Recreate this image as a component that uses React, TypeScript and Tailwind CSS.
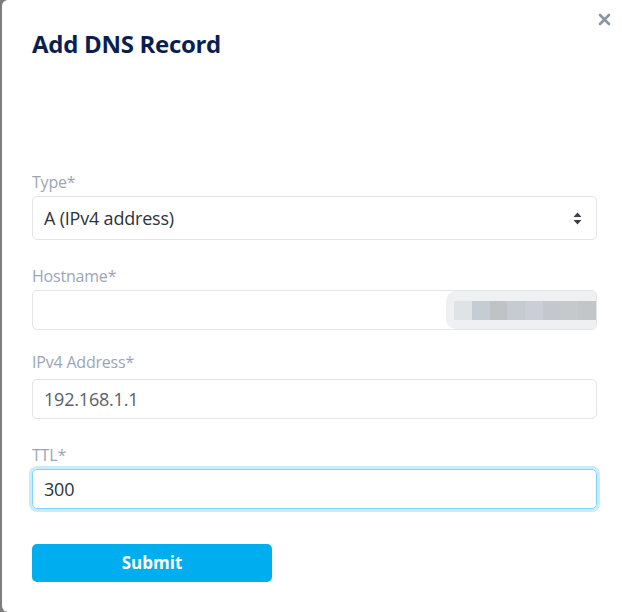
import { useState } from "react";

const BLUR_BLOCKS = ["#e0e3e6", "#c5ccd3", "#bfc3c5", "#c6cad1", "#cbced6", "#c4c8cc", "#c6c9cc", "#c3c6c8"];

function Label({ text, className = "" }: { text: string; className?: string }) {
  return <label className={`block text-[16px] leading-5 tracking-[-0.2px] text-[#9ca5b6] ${className}`}>{text}</label>;
}

export default function App() {
  const [ttl, setTtl] = useState("300");

  return (
    <div className="h-[612px] w-[622px] overflow-hidden bg-[#7d7d7d] font-['Open_Sans',sans-serif]">
      <div className="relative ml-[2px] h-[612px] rounded-l-md bg-white pl-[30px] pr-[25px]">
        <button className="absolute right-[11px] top-[13px] text-[#8a94a7]" aria-label="Close">
          <svg width="13" height="13" viewBox="0 0 13 13" fill="none" stroke="currentColor" strokeWidth="2.6" strokeLinecap="round">
            <path d="M2 2l9 9M11 2l-9 9" />
          </svg>
        </button>

        <h2 className="pt-[28px] text-[24px] font-bold leading-[32px] tracking-[-0.3px] text-[#0b1f4f]">Add DNS Record</h2>

        <form className="mt-[112px]" onSubmit={(e) => e.preventDefault()}>
          <Label text="Type*" />
          <div className="mt-[4px] flex h-[44px] items-center justify-between rounded-[5px] border border-[#e2e4e8] pl-[11px] pr-[14px]">
            <span className="text-[18px] tracking-[-0.2px] text-[#2f3338]">A (IPv4 address)</span>
            <svg width="9" height="13" viewBox="0 0 9 13" fill="#3b3f45">
              <path d="M4.5 0.5L8.5 5H0.5Z" />
              <path d="M4.5 12.5L8.5 8H0.5Z" />
            </svg>
          </div>

          <Label text="Hostname*" className="mt-[26px]" />
          <div className="mt-[4px] flex h-[40px] overflow-hidden rounded-[5px] border border-[#e2e4e8]">
            <div className="flex-1" />
            <div className="flex w-[150px] items-center rounded-l-[10px] bg-[#eef0f2] pl-[8px]">
              <div className="flex h-[19px] flex-1">
                {BLUR_BLOCKS.map((c, i) => (
                  <div key={i} className="h-full flex-1" style={{ backgroundColor: c }} />
                ))}
              </div>
            </div>
          </div>

          <Label text="IPv4 Address*" className="mt-[22px]" />
          <div className="mt-[7px] flex h-[40px] items-center rounded-[5px] border border-[#e2e4e8] px-[11px]">
            <span className="text-[18px] tracking-[-0.2px] text-[#5b6068]">192.168.1.1</span>
          </div>

          <Label text="TTL*" className="mt-[26px]" />
          <input
            value={ttl}
            onChange={(e) => setTtl(e.target.value)}
            className="mt-[4px] block h-[40px] w-full rounded-[5px] border border-[#7fd4f7] px-[11px] text-[18px] tracking-[-0.2px] text-[#2f3338] shadow-[0_0_0_3px_#c9ecfb] outline-none"
          />

          <button
            type="submit"
            className="mt-[35px] h-[38px] w-[240px] rounded-[5px] bg-[#00aeef] text-[17px] font-bold text-white"
          >
            Submit
          </button>
        </form>
      </div>
    </div>
  );
}
